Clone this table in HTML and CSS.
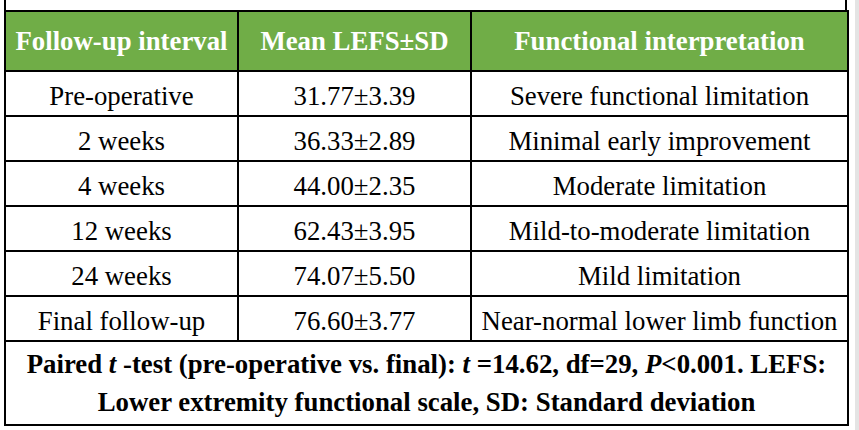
FILE: index.html
```html
<!DOCTYPE html>
<html lang="en">
<head>
<meta charset="utf-8">
<title>LEFS table</title>
<link rel="stylesheet" href="styles.css">
</head>
<body>
<div class="page">
  <div class="main">
    <div class="clip-row"></div>
    <table class="lefs">
      <colgroup>
        <col class="c1">
        <col class="c2">
        <col class="c3">
      </colgroup>
      <thead>
        <tr class="head">
          <th>Follow-up interval</th>
          <th>Mean LEFS±SD</th>
          <th>Functional interpretation</th>
        </tr>
      </thead>
      <tbody>
        <tr><td>Pre-operative</td><td>31.77±3.39</td><td>Severe functional limitation</td></tr>
        <tr><td>2 weeks</td><td>36.33±2.89</td><td>Minimal early improvement</td></tr>
        <tr><td>4 weeks</td><td>44.00±2.35</td><td>Moderate limitation</td></tr>
        <tr><td>12 weeks</td><td>62.43±3.95</td><td>Mild-to-moderate limitation</td></tr>
        <tr><td>24 weeks</td><td>74.07±5.50</td><td>Mild limitation</td></tr>
        <tr><td>Final follow-up</td><td>76.60±3.77</td><td>Near-normal lower limb function</td></tr>
        <tr class="foot">
          <td colspan="3">Paired <i>t</i> -test (pre-operative vs. final): <i>t</i> =14.62, df=29, <i>P</i>&lt;0.001. LEFS:<br>Lower extremity functional scale, SD: Standard deviation</td>
        </tr>
      </tbody>
    </table>
  </div>
  <div class="edge"></div>
</div>
</body>
</html>
```

FILE: styles.css
```css
html, body {
  margin: 0;
  padding: 0;
  background: #ffffff;
}

.page {
  display: flex;
  width: 859px;
  height: 430px;
  overflow: hidden;
}

.main {
  width: 855px;
  padding-left: 4px;
  box-sizing: border-box;
}

.edge {
  width: 4px;
  background: #e4e4e4;
}

.clip-row {
  width: 843px;
  height: 10px;
  box-sizing: border-box;
  border-left: 2px solid #000;
  border-right: 2px solid #000;
}

.lefs {
  width: 843px;
  border-collapse: collapse;
  table-layout: fixed;
  font-family: "Liberation Serif", "Times New Roman", serif;
  font-size: 26.8px;
  color: #000;
}

.c1 { width: 233px; }
.c2 { width: 233px; }
.c3 { width: 377px; }

.lefs th,
.lefs td {
  border: 2px solid #000;
  padding: 0;
  text-align: center;
  vertical-align: middle;
  white-space: nowrap;
}

.head th {
  background: #70ad47;
  color: #ffffff;
  font-weight: bold;
  height: 58px;
}

.lefs tbody td {
  height: 38px;
  padding-top: 5px;
  line-height: 31px;
}

.lefs tbody .foot td {
  font-weight: bold;
  line-height: 38px;
  height: 82px;
  padding-top: 0;
}
```
